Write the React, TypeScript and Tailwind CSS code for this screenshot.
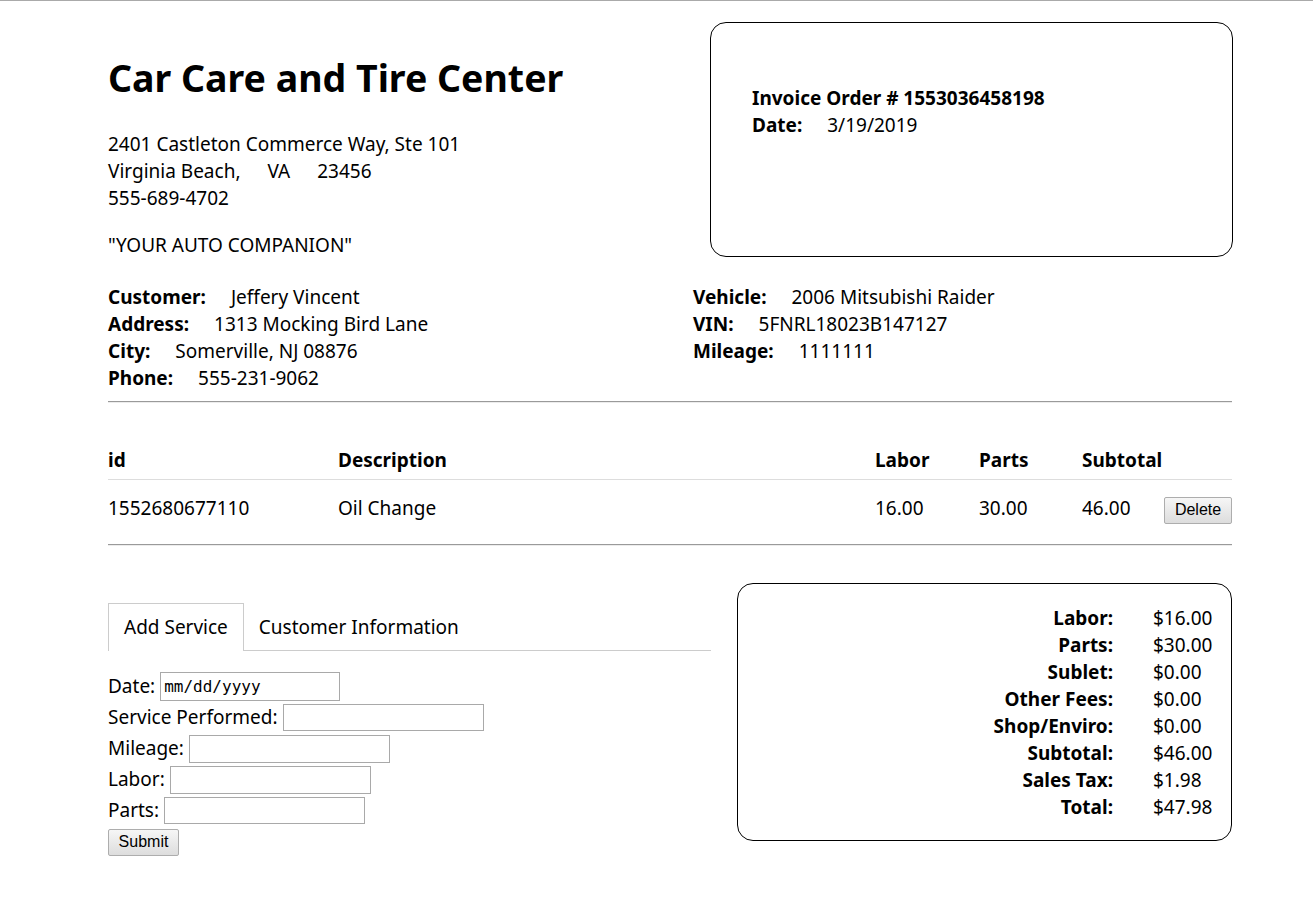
const customer = [
  { label: 'Customer:', value: 'Jeffery Vincent' },
  { label: 'Address:', value: '1313 Mocking Bird Lane' },
  { label: 'City:', value: 'Somerville, NJ 08876' },
  { label: 'Phone:', value: '555-231-9062' },
];

const vehicle = [
  { label: 'Vehicle:', value: '2006 Mitsubishi Raider' },
  { label: 'VIN:', value: '5FNRL18023B147127' },
  { label: 'Mileage:', value: '1111111' },
];

const totals = [
  { label: 'Labor:', value: '$16.00' },
  { label: 'Parts:', value: '$30.00' },
  { label: 'Sublet:', value: '$0.00' },
  { label: 'Other Fees:', value: '$0.00' },
  { label: 'Shop/Enviro:', value: '$0.00' },
  { label: 'Subtotal:', value: '$46.00' },
  { label: 'Sales Tax:', value: '$1.98' },
  { label: 'Total:', value: '$47.98' },
];

const fields = [
  { label: 'Service Performed:', h: 'h-[27px]' },
  { label: 'Mileage:', h: 'h-[28px]' },
  { label: 'Labor:', h: 'h-[28px]' },
  { label: 'Parts:', h: 'h-[27px]' },
];

const btn =
  "border border-[#adadad] bg-gradient-to-b from-[#f6f6f6] to-[#dddddd] rounded-[2px] text-[16px] leading-[18px] pb-[1px] text-black font-['Liberation_Sans',Arial,sans-serif]";

const Rule = () => <div className="h-[2px] border-t border-[#9a9a9a] border-b border-b-[#ececec]" />;

const InfoRow = ({ label, value }: { label: string; value: string }) => (
  <div className="flex h-[27px] items-center">
    <span className="font-bold mr-[25px]">{label}</span>
    <span>{value}</span>
  </div>
);

export default function App() {
  return (
    <div className="min-h-screen bg-white border-t border-[#aaaaaa] text-black text-[19px] leading-[27px] font-['Noto_Sans',sans-serif]">
      <div className="ml-[108px] w-[1124px] pb-[40px]">
        {/* header */}
        <div className="flex justify-between pt-[21px]">
          <div>
            <h1 className="mt-[32px] text-[37.5px] leading-[48px] font-bold">Car Care and Tire Center</h1>
            <div className="mt-[29px]">
              <div>2401 Castleton Commerce Way, Ste 101</div>
              <div>
                Virginia Beach,<span className="inline-block w-[27px]" />VA<span className="inline-block w-[27px]" />23456
              </div>
              <div>555-689-4702</div>
            </div>
            <div className="mt-[20px]">"YOUR AUTO COMPANION"</div>
          </div>
          <div className="w-[523px] h-[235px] -mr-px rounded-[16px] border border-black pl-[41px] pt-[62px]">
            <div className="font-bold">Invoice Order # 1553036458198</div>
            <InfoRow label="Date:" value="3/19/2019" />
          </div>
        </div>

        {/* customer / vehicle */}
        <div className="flex mt-[25px]">
          <div className="w-[585px]">
            {customer.map((c) => (
              <InfoRow key={c.label} {...c} />
            ))}
          </div>
          <div>
            {vehicle.map((v) => (
              <InfoRow key={v.label} {...v} />
            ))}
          </div>
        </div>

        <div className="mt-[9px]">
          <Rule />
        </div>

        {/* services table */}
        <div className="mt-[38px]">
          <div className="flex h-[39px] items-center font-bold border-b border-[#dddddd]">
            <div className="w-[230px]">id</div>
            <div className="w-[537px]">Description</div>
            <div className="w-[104px]">Labor</div>
            <div className="w-[103px]">Parts</div>
            <div className="w-[82px]">Subtotal</div>
          </div>
          <div className="flex h-[57px] items-center">
            <div className="w-[230px]">1552680677110</div>
            <div className="w-[537px]">Oil Change</div>
            <div className="w-[104px]">16.00</div>
            <div className="w-[103px]">30.00</div>
            <div className="w-[82px]">46.00</div>
            <button className={`${btn} w-[68px] h-[27px] mt-[3px]`}>Delete</button>
          </div>
        </div>

        <div className="mt-[7px]">
          <Rule />
        </div>

        {/* bottom */}
        <div className="flex items-start justify-between mt-[37px]">
          <div className="w-[603px] mt-[20px]">
            <div className="flex border-b border-[#cccccc] h-[48px]">
              <div className="h-[48px] px-[15px] flex items-center border border-b-0 border-[#cccccc] bg-white -mb-px">
                Add Service
              </div>
              <div className="h-[48px] px-[15px] flex items-center">Customer Information</div>
            </div>
            <div className="mt-[20px]">
              <div className="flex h-[31px] items-center">
                <span>Date:</span>
                <input
                  type="text"
                  placeholder="mm/dd/yyyy"
                  className="ml-[5px] w-[180px] h-[29px] border border-[#a9a9a9] px-[3px] text-[16px] font-['DejaVu_Sans_Mono',monospace] placeholder:text-black outline-none"
                />
              </div>
              {fields.map((f) => (
                <div key={f.label} className="flex h-[31px] items-center">
                  <span>{f.label}</span>
                  <input type="text" className={`ml-[5px] w-[201px] ${f.h} border border-[#a9a9a9] outline-none`} />
                </div>
              ))}
              <button className={`${btn} w-[71px] h-[27px] mt-[3px]`}>Submit</button>
            </div>
          </div>

          <div className="w-[495px] h-[258px] rounded-[16px] border border-black pt-[21px] pr-[14px]">
            {totals.map((t) => (
              <div key={t.label} className="flex h-[27px] items-center">
                <div className="flex-1 text-right font-bold">{t.label}</div>
                <div className="w-[64px] ml-[40px]">{t.value}</div>
              </div>
            ))}
          </div>
        </div>
      </div>
    </div>
  );
}
